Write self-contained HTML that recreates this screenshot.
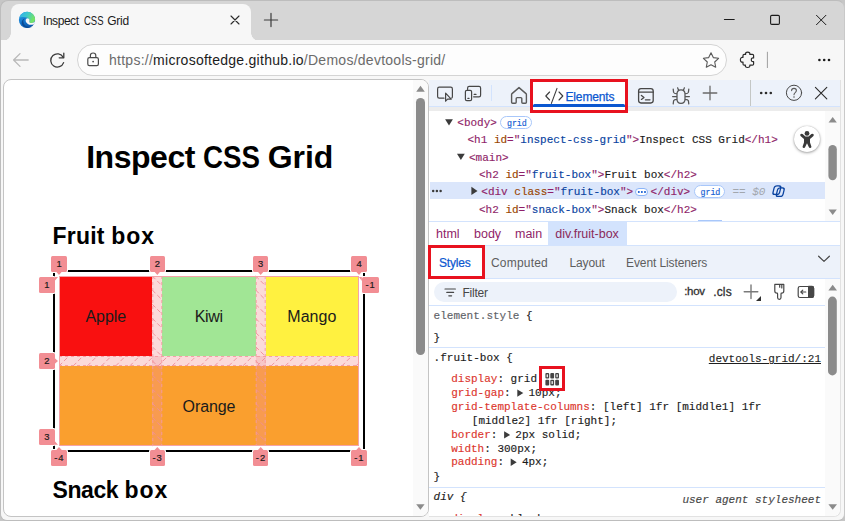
<!DOCTYPE html>
<html lang="en">
<head>
<meta charset="utf-8">
<title>Inspect CSS Grid</title>
<style>
*{box-sizing:border-box;margin:0;padding:0}
html,body{width:845px;height:521px;overflow:hidden;background:#c6c6c6}
body{position:relative;font-family:"Liberation Sans",sans-serif;color:#1b1b1b}
.abs{position:absolute}
.t{position:absolute;white-space:nowrap;line-height:1}
.mono{font-family:"Liberation Mono",monospace;font-size:11px;-webkit-text-stroke:0.15px currentColor}
#win{position:absolute;left:0;top:0;width:844.5px;height:521px;background:#d6d6d6;border-radius:8px 8px 7px 7px;overflow:hidden;border:1px solid #bdbdbd;border-right-color:#c9c9c9;border-bottom-color:#bdbdbd}
#tab{position:absolute;left:11px;top:4px;width:240px;height:37px;background:#f7f7f7;border-radius:8px 8px 0 0}
#tab:before,#tab:after{content:"";position:absolute;bottom:0;width:8px;height:8px}
#tab:before{left:-8px;background:radial-gradient(circle at 0 0,transparent 7.5px,#f7f7f7 8px)}
#tab:after{right:-8px;background:radial-gradient(circle at 100% 0,transparent 7.5px,#f7f7f7 8px)}
#toolbar{position:absolute;left:-1px;top:39px;width:845px;height:481px;background:#f7f7f7}
#addr{position:absolute;left:77px;top:44px;width:650px;height:32px;border:1px solid #d4d4d4;border-radius:16px;background:#fdfdfd}
#page{position:absolute;left:3px;top:79px;width:426px;height:438px;background:#fff;border:1px solid #c4c4c4;border-radius:8px;overflow:hidden}
#dt{position:absolute;left:429px;top:80px;width:411.5px;height:436.5px;background:#fff;border-right:1px solid #e2e2e2;border-bottom:1px solid #e2e2e2;border-radius:0 0 7px 0;overflow:hidden}
.red{position:absolute;border:3px solid #e8121f}
.lbl{position:absolute;background:#f28e94;color:#1b1b1b;font-size:9.4px;-webkit-text-stroke:0.2px #1b1b1b;text-align:center;border-radius:1.5px;line-height:16px;height:15.6px;width:15.6px;box-shadow:0 0 0 1px #fff}
.sep{position:absolute;height:1px;background:#d3e3fd}
.p{color:#dc362e}
.tag{color:#8f1f69}
.an{color:#994500}
.av{color:#0842a0}
</style>
</head>
<body>
<div id="win"><div id="toolbar"></div></div>
<div id="tab"></div>
<div id="addr"></div>

<!--CH-->
<svg class="abs" style="left:0;top:0" width="845" height="80" viewBox="0 0 845 80" fill="none" stroke-linecap="round" stroke-linejoin="round">
<defs>
<linearGradient id="eg1" x1="0" y1="0" x2="1" y2="1"><stop offset="0" stop-color="#35c1f1"/><stop offset=".5" stop-color="#1b9de2"/><stop offset="1" stop-color="#0c59a4"/></linearGradient>
<linearGradient id="eg2" x1="0" y1="0" x2="1" y2="0.35"><stop offset="0" stop-color="#31aef0"/><stop offset=".5" stop-color="#3cc6cf"/><stop offset="1" stop-color="#74e465"/></linearGradient>
<linearGradient id="eg3" x1="0" y1="0" x2=".6" y2="1"><stop offset="0" stop-color="#2a9fe3"/><stop offset=".6" stop-color="#1374cc"/><stop offset="1" stop-color="#0b55a8"/></linearGradient>
</defs>
<!-- edge logo -->
<g>
<circle cx="27" cy="19.9" r="8.1" fill="url(#eg3)"/>
<path d="M19.3 17.4Q21.6 11.9 27.2 11.8Q33.6 12 35 18.4Q35.5 22.4 31.8 22.9Q28.8 23 29.4 20.9Q29.8 18.6 27.4 17.8Q23.6 16.6 19.3 17.4Z" fill="url(#eg2)"/>
<path d="M24.6 18.2Q22.6 20.4 23.8 23.4Q25.6 27.2 30.6 27.2Q32.6 26.8 33.8 25.6Q31.6 28 27.6 28Q23.4 27.6 21.8 24Q21 20.4 24.6 18.2Z" fill="#0b4a94"/>
<path d="M27.4 18.2Q29.8 18.6 29.4 20.9Q28.8 23 31.8 22.9Q33.8 22.8 35 21.4Q35 23.2 33.8 24.2Q30.6 25.6 27.8 24Q25.2 22.4 25.6 20Q26 18.2 27.4 18.2Z" fill="#f7f7f7"/>
</g>
<!-- tab close -->
<path d="M231 16L239 24M239 16L231 24" stroke="#2b2b2b" stroke-width="1.1"/>
<!-- new tab plus -->
<path d="M264.4 20H277.6M271 13.4V26.6" stroke="#3b3b3b" stroke-width="1.2"/>
<!-- window controls -->
<path d="M724.4 19.5H734.2" stroke="#1b1b1b" stroke-width="1.1"/>
<rect x="770.6" y="15.4" width="8.8" height="9" rx="1.2" stroke="#1b1b1b" stroke-width="1.1"/>
<path d="M816.2 15L826.2 25M826.2 15L816.2 25" stroke="#1b1b1b" stroke-width="1" stroke-linecap="butt"/>
<!-- back -->
<path d="M13.6 60H28.2M20 53.6L13.6 60L20 66.4" stroke="#b9b9b9" stroke-width="1.3"/>
<!-- reload -->
<path d="M63.2 57.4A6.6 6.6 0 1 0 63.6 62.6" stroke="#3b3b3b" stroke-width="1.3"/>
<path d="M63.8 53.2V57.8H59.2" stroke="#3b3b3b" stroke-width="1.3"/>
<!-- lock -->
<rect x="87.8" y="57.6" width="10.6" height="8" rx="1.6" stroke="#4a4a4a" stroke-width="1.2"/>
<path d="M90.4 57.4V55.6Q90.4 53 93.1 53Q95.8 53 95.8 55.6V57.4" stroke="#4a4a4a" stroke-width="1.2"/>
<circle cx="93.1" cy="61.6" r=".9" fill="#4a4a4a"/>
<!-- star -->
<path d="M711 52.8L713.3 57.6L718.6 58.3L714.7 62L715.7 67.2L711 64.7L706.3 67.2L707.3 62L703.4 58.3L708.7 57.6Z" stroke="#5a5a5a" stroke-width="1.1"/>
<!-- puzzle -->
<path d="M744.2 54.4H745.6Q745.1 52.2 747.7 52.2Q750.3 52.2 749.8 54.4H752.4Q753.6 54.4 753.6 55.6V58Q751.3 57.5 751.3 59.8Q751.3 62.1 753.6 61.6V64Q753.6 65.2 752.4 65.2H749.8Q750.3 67.5 747.6 67.5Q744.9 67.5 745.4 65.2H744.2Q743 65.2 743 64V62.1Q740.4 62.6 740.4 59.8Q740.4 57 743 57.5V55.6Q743 54.4 744.2 54.4Z" stroke="#2b2b2b" stroke-width="1.2"/>
<path d="M767.4 52.2V67.6" stroke="#9e9e9e" stroke-width="1"/>
<g fill="#1b1b1b"><circle cx="819.4" cy="60" r="1.3"/><circle cx="824.2" cy="60" r="1.3"/><circle cx="829" cy="60" r="1.3"/></g>
</svg>
<!--/CH-->
<!-- tab contents -->
<span class="t" id="tabtitle" style="left:43px;top:14.5px;font-size:12px"><span class="abs" style="left:0;top:0;letter-spacing:-0.45px">Inspect </span><span class="abs" style="left:41.2px;top:0;transform:scaleX(.79);transform-origin:0 0">CSS </span><span class="abs" style="left:64.2px;top:0;letter-spacing:-0.25px">Grid</span></span>

<!-- url -->
<span class="t" id="url" style="left:109px;top:52.6px;font-size:14px;letter-spacing:0.26px;color:#6b6b6b">https://<span style="color:#1b1b1b">microsoftedge.github.io</span>/Demos/devtools-grid/</span>

<div id="page">
</div>

<div id="dt">
</div>


<!-- PAGE CONTENT -->
<span class="t" id="h1" style="left:86.2px;top:140.8px;font-size:32px;font-weight:bold;color:#000"><span class="abs" style="left:0;top:0;letter-spacing:-0.47px">Inspect </span><span class="abs" style="left:116.6px;top:0;transform:scaleX(.865);transform-origin:0 0">CSS </span><span class="abs" style="left:181.6px;top:0;letter-spacing:-0.1px">Grid</span></span>
<span class="t" id="h2a" style="left:52.6px;top:224.7px;font-size:23px;font-weight:bold;color:#000"><span class="abs" style="left:0;top:0;letter-spacing:0.2px">Fruit </span><span class="abs" style="left:58.7px;top:0;letter-spacing:0.95px">box</span></span>
<span class="t" id="h2b" style="left:52.6px;top:478.8px;font-size:23px;font-weight:bold;color:#000"><span class="abs" style="left:0;top:0;letter-spacing:-0.45px">Snack </span><span class="abs" style="left:71.8px;top:0;letter-spacing:0.95px">box</span></span>
<!--GRID-->
<div class="abs" style="left:53px;top:270px;width:312px;height:182px;border:2px solid #000"></div>
<div class="abs" style="left:59px;top:276px;width:300px;height:170px;background:#fbdada"></div>
<div class="abs" style="left:152.33px;top:356px;width:10px;height:10px;background:#f7c6c8"></div>
<div class="abs" style="left:255.67px;top:356px;width:10px;height:10px;background:#f7c6c8"></div>
<div class="abs cell" style="left:59px;top:276px;width:93.33px;height:80px;background:#f91010"></div>
<div class="abs cell" style="left:162.33px;top:276px;width:93.34px;height:80px;background:#a1e695"></div>
<div class="abs cell" style="left:265.67px;top:276px;width:93.33px;height:80px;background:#fff140"></div>
<div class="abs cell" style="left:59px;top:366px;width:300px;height:80px;background:#fa9f2e"></div>
<div class="abs" style="left:152.33px;top:366px;width:10px;height:80px;background:#f89b50"></div>
<div class="abs" style="left:255.67px;top:366px;width:10px;height:80px;background:#f89b50"></div>
<span class="t cl" id="apple" style="left:85.5px;top:308.9px;font-size:16px;letter-spacing:-0.05px">Apple</span>
<span class="t cl" id="kiwi" style="left:194.8px;top:308.9px;font-size:16px;letter-spacing:-0.35px">Kiwi</span>
<span class="t cl" id="mango" style="left:287.3px;top:308.9px;font-size:16px;letter-spacing:0.05px">Mango</span>
<span class="t cl" id="orange" style="left:182.6px;top:399.1px;font-size:16px;letter-spacing:-0.1px">Orange</span>
<svg class="abs" style="left:36px;top:250px" width="360" height="225" viewBox="36 250 360 225">
<path d="M152.3 276.0L162.3 286.0M152.3 290.1L162.3 300.1M152.3 304.3L162.3 314.3M152.3 318.4L162.3 328.4M152.3 332.6L162.3 342.6M152.3 346.7L162.3 356.7M152.3 360.8L162.3 370.8M152.3 375.0L162.3 385.0M152.3 389.1L162.3 399.1M152.3 403.3L162.3 413.3M152.3 417.4L162.3 427.4M152.3 431.5L162.3 441.5M152.3 445.7L152.7 446.0M255.7 276.0L265.7 286.0M255.7 290.1L265.7 300.1M255.7 304.3L265.7 314.3M255.7 318.4L265.7 328.4M255.7 332.6L265.7 342.6M255.7 346.7L265.7 356.7M255.7 360.8L265.7 370.8M255.7 375.0L265.7 385.0M255.7 389.1L265.7 399.1M255.7 403.3L265.7 413.3M255.7 417.4L265.7 427.4M255.7 431.5L265.7 441.5M255.7 445.7L256.0 446.0M59.0 366L69.0 356.0M73.1 366L83.1 356.0M87.3 366L97.3 356.0M101.4 366L111.4 356.0M115.6 366L125.6 356.0M129.7 366L139.7 356.0M143.8 366L153.8 356.0M158.0 366L168.0 356.0M172.1 366L182.1 356.0M186.3 366L196.3 356.0M200.4 366L210.4 356.0M214.5 366L224.5 356.0M228.7 366L238.7 356.0M242.8 366L252.8 356.0M257.0 366L267.0 356.0M271.1 366L281.1 356.0M285.2 366L295.2 356.0M299.4 366L309.4 356.0M313.5 366L323.5 356.0M327.7 366L337.7 356.0M341.8 366L351.8 356.0M355.9 366L359.0 362.9" stroke="#ef8d97" stroke-opacity=".9" stroke-width="1" stroke-dasharray="4.5 2.5" fill="none"/>
<path d="M152.8 276V446M161.8 276V446M256.2 276V446M265.2 276V446M59 356.5H359M59 365.5H359" stroke="#f49aa2" stroke-opacity=".9" stroke-width="1" stroke-dasharray="3 3" fill="none"/>
<path d="M59.5 276V446M358.5 276V446M59 276.5H359M59 445.5H359" stroke="#f5a3a9" stroke-width="1" fill="none"/>
</svg>
<div class="lbl" style="left:51.2px;top:256.0px;width:15.6px;">1</div>
<div class="lbl" style="left:149.5px;top:256.0px;width:15.6px;">2</div>
<div class="lbl" style="left:252.9px;top:256.0px;width:15.6px;">3</div>
<div class="lbl" style="left:351.2px;top:256.0px;width:15.6px;">4</div>
<div class="lbl" style="left:51.2px;top:450.0px;width:15.6px;letter-spacing:0.9px;text-indent:0.5px;">-4</div>
<div class="lbl" style="left:149.5px;top:450.0px;width:15.6px;letter-spacing:0.9px;text-indent:0.5px;">-3</div>
<div class="lbl" style="left:252.9px;top:450.0px;width:15.6px;letter-spacing:0.9px;text-indent:0.5px;">-2</div>
<div class="lbl" style="left:351.2px;top:450.0px;width:15.6px;letter-spacing:0.9px;text-indent:0.5px;">-1</div>
<div class="lbl" style="left:39.1px;top:277.1px;width:15.6px;">1</div>
<div class="lbl" style="left:39.1px;top:353.2px;width:15.6px;">2</div>
<div class="lbl" style="left:39.1px;top:429.1px;width:15.6px;">3</div>
<div class="lbl" style="left:361.7px;top:277.1px;width:17.2px;letter-spacing:0.9px;text-indent:0.5px;">-1</div>
<svg class="abs" style="left:36px;top:250px" width="360" height="225" viewBox="36 250 360 225"><path d="M56.0 271.5L62.0 271.5L59.0 275.0ZM154.3 271.5L160.3 271.5L157.3 275.0ZM257.7 271.5L263.7 271.5L260.7 275.0ZM356.0 271.5L362.0 271.5L359.0 275.0ZM56.0 450.2L62.0 450.2L59.0 447.0ZM154.3 450.2L160.3 450.2L157.3 447.0ZM257.7 450.2L263.7 450.2L260.7 447.0ZM356.0 450.2L362.0 450.2L359.0 447.0ZM54.6 277.1L58.0 277.1L54.6 281.0ZM54.6 358.0L54.6 364.0L58.0 361.0ZM54.6 444.7L58.0 444.7L54.6 441.0ZM361.8 277.1L359.0 277.1L361.8 281.0Z" fill="#f28e94"/></svg>
<!--/GRID-->
<!-- page scrollbar -->
<div class="abs" style="left:413px;top:80px;width:15px;height:436px;background:#fafafa;border-radius:0 7px 7px 0"></div>
<svg class="abs" style="left:413px;top:80px" width="15" height="436" viewBox="413 80 15 436"><g fill="#8b8b8b"><path d="M416.2 91.8H424.8L420.5 85.8Z"/><path d="M416.2 504.2H424.6L420.4 509.8Z"/></g></svg>
<div class="abs" style="left:416px;top:97.8px;width:9px;height:257.2px;background:#8b8b8b;border-radius:4.5px"></div>

<div id="dtclip" style="position:absolute;left:0;top:0;width:840.4px;height:516.4px;overflow:hidden;border-radius:0 0 7px 0">
<!--DT-->
<div class="abs" style="left:429px;top:80px;width:411px;height:26px;background:#edf2fa"></div>
<div class="abs" style="left:429px;top:106px;width:411px;height:1px;background:#d3e3fd"></div>
<div class="abs" style="left:429px;top:107px;width:411px;height:3.6px;background:#ececec"></div>
<div class="abs" style="left:491px;top:85px;width:1px;height:16px;background:#d3e3fd"></div>
<div class="abs" style="left:750px;top:80px;width:1px;height:26px;background:#c4c7c5"></div>
<div class="abs" style="left:533px;top:82px;width:92px;height:28px;background:#fff"></div>
<div class="abs" style="left:533px;top:104.3px;width:92px;height:2.6px;background:#0b57d0;border-radius:1.5px 1.5px 0 0"></div>
<span class="t" id="eltab" style="left:565.5px;top:90.5px;font-size:12px;letter-spacing:-0.15px;color:#0b57d0;-webkit-text-stroke:0.25px #0b57d0">Elements</span>
<div class="red" style="left:530px;top:79px;width:98px;height:34px"></div>
<svg class="abs" style="left:429px;top:80px" width="411" height="30" viewBox="429 80 411 30" fill="none" stroke="#474747" stroke-width="1.2" stroke-linecap="round" stroke-linejoin="round">
<!-- inspect -->
<path d="M444 98.2H439.3Q437.6 98.2 437.6 96.5V88.9Q437.6 87.2 439.3 87.2H450.7Q452.4 87.2 452.4 88.9V96.5Q452.4 97.6 451.8 98"/>
<path d="M445.6 93.2V101.2L447.6 99.2H451.2Z"/>
<!-- device -->
<path d="M467.6 89.5V88Q467.6 86.4 469.2 86.4H479Q480.6 86.4 480.6 88V95.2Q480.6 96.8 479 96.8H473.6"/>
<rect x="465.4" y="90.4" width="6.2" height="10.2" rx="1.4"/>
<path d="M467.9 98.4H469M474.2 94.4H476"/>
<!-- home -->
<path stroke="#5a5a5a" stroke-width="1.4" d="M519 87.6L512 93.6Q511.6 94 511.6 94.6V102.2Q511.6 103.2 512.6 103.2H515.2Q516.2 103.2 516.2 102.2V98.6Q516.2 97.6 517.2 97.6H520.8Q521.8 97.6 521.8 98.6V102.2Q521.8 103.2 522.8 103.2H525.4Q526.4 103.2 526.4 102.2V94.6Q526.4 94 526 93.6Z"/>
<!-- code </> -->
<path stroke="#3c3c3c" stroke-width="1.1" d="M549.6 92L545.8 96L549.6 100M559 92L562.8 96L559 100M557 88.4L551.4 103.4"/>
<!-- console -->
<rect x="638.6" y="88.6" width="14.6" height="14.4" rx="2.4" stroke-width="1.3"/>
<path stroke-width="1.3" d="M638.6 92.2H653.2M641.4 95.4L644 97.4L641.4 99.4M645.4 99.8H650"/>
<!-- bug -->
<path stroke="#555" stroke-width="1.25" d="M677 94Q677 89.8 681 89.8Q685 89.8 685 94V99Q685 103.4 681 103.4Q677 103.4 677 99ZM678.6 90.4L677.6 87.8M683.4 90.4L684.4 87.8M672.6 96.6H677M685 96.6H689.4M677 93.8Q674 93.6 673.6 92.4L673.2 89.2M685 93.8Q688 93.6 688.4 92.4L688.8 89.2M677 99.4Q674 99.6 673.6 100.8L673.2 103.8M685 99.4Q688 99.6 688.4 100.8L688.8 103.8"/>
<!-- plus -->
<path stroke="#6a6a6a" stroke-width="1.3" d="M703.2 93H716.8M710 86.2V99.8"/>
<!-- dots -->
<g fill="#2b2b2b" stroke="none"><circle cx="761.2" cy="93" r="1.3"/><circle cx="766" cy="93" r="1.3"/><circle cx="770.8" cy="93" r="1.3"/></g>
<!-- help -->
<circle cx="794" cy="92.8" r="7.6" stroke="#474747" stroke-width="1"/>
<path stroke="#5a5a5a" stroke-width="1.1" d="M791.6 90.6Q791.6 88.4 794 88.4Q796.4 88.4 796.4 90.6Q796.4 91.8 795.2 92.6Q794 93.4 794 94.8"/>
<circle cx="794" cy="97" r=".8" fill="#5a5a5a" stroke="none"/>
<!-- close -->
<path stroke="#2b2b2b" stroke-width="1.1" d="M815.4 87.4L826.8 98.8M826.8 87.4L815.4 98.8"/>
</svg>
<div class="abs" style="left:825px;top:110.6px;width:15.4px;height:110.4px;background:#fafafa"></div>
<div class="abs" style="left:825px;top:279px;width:15.4px;height:238px;background:#fafafa"></div>
<div class="abs" style="left:430px;top:182.2px;width:395px;height:17.2px;background:#dbe6fb"></div>
<span class="t mono" id=r0 style="left:457.3px;top:118.2px"><span class="tag">&lt;body&gt;</span></span>
<span class="t mono" id=r1 style="left:467.5px;top:134.8px"><span class="tag">&lt;h1 </span><span class="an">id</span><span class="tag">="</span><span class="av">inspect-css-grid</span><span class="tag">"&gt;</span>Inspect CSS Grid<span class="tag">&lt;/h1&gt;</span></span>
<span class="t mono" id=r2 style="left:469px;top:152.5px"><span class="tag">&lt;main&gt;</span></span>
<span class="t mono" id=r3 style="left:479px;top:169.5px"><span class="tag">&lt;h2 </span><span class="an">id</span><span class="tag">="</span><span class="av">fruit-box</span><span class="tag">"&gt;</span>Fruit box<span class="tag">&lt;/h2&gt;</span></span>
<span class="t mono" id=r4 style="left:481.3px;top:187.1px"><span class="tag">&lt;div </span><span class="an">class</span><span class="tag">="</span><span class="av">fruit-box</span><span class="tag">"&gt;</span></span>
<span class="t mono" id=r4b style="left:650.6px;top:187.1px"><span class="tag">&lt;/div&gt;</span></span>
<span class="t mono" id=r4c style="left:732.4px;top:187.1px"><span style="color:#a2a7ae;font-style:italic;-webkit-text-stroke:0">== $0</span></span>
<span class="t mono" id=r5 style="left:479px;top:204.6px"><span class="tag">&lt;h2 </span><span class="an">id</span><span class="tag">="</span><span class="av">snack-box</span><span class="tag">"&gt;</span>Snack box<span class="tag">&lt;/h2&gt;</span></span>
<div class="abs" style="left:500.2px;top:116.2px;width:31.8px;height:13.3px;border:1px solid #a8c7fa;border-radius:6.65px;background:#fff"></div>
<span class="t mono" style="left:507px;top:119.7px;font-size:8.4px;letter-spacing:-0.1px;color:#1660d4;-webkit-text-stroke:0.15px #1660d4">grid</span>
<div class="abs" style="left:693.8px;top:185.2px;width:31.4px;height:13px;border:1px solid #a8c7fa;border-radius:6.5px;background:#fff"></div>
<span class="t mono" style="left:700.6px;top:188.7px;font-size:8.4px;letter-spacing:-0.1px;color:#1660d4;-webkit-text-stroke:0.15px #1660d4">grid</span>
<div class="abs" style="left:635.4px;top:187.6px;width:13px;height:8.6px;border:1px solid #8ab4f8;border-radius:4.3px;background:#fff"></div>
<svg class="abs" style="left:429px;top:110px" width="411" height="112" viewBox="429 110 411 112"><g fill="#3b3b3b"><path d="M445.1 119.3H452.9L449 125.4Z"/><path d="M457 153.8H464.8L460.9 159.9Z"/><path d="M471.4 186.7V195.1L477.5 190.9Z"/><circle cx="433.2" cy="191" r="1.25"/><circle cx="436.9" cy="191" r="1.25"/><circle cx="440.6" cy="191" r="1.25"/></g><g fill="#0b57d0"><circle cx="638.8" cy="191.9" r="1"/><circle cx="641.9" cy="191.9" r="1"/><circle cx="645" cy="191.9" r="1"/></g><g fill="none" stroke="#0842a0" stroke-width="1.3" stroke-linejoin="round"><rect x="773.6" y="185.8" width="6.6" height="8.6" rx="2.2" transform="skewX(-14)" style="transform-origin:777px 190px"/><rect x="777" y="187.8" width="6.6" height="8.6" rx="2.2" transform="skewX(-14)" style="transform-origin:780px 192px"/></g><g fill="#8b8b8b"><path d="M828.6 122.6H836.8L832.7 117Z"/><path d="M828.6 209.4H836.8L832.7 215Z"/><rect x="828.4" y="145" width="8.4" height="35.2" rx="4.2"/></g></svg>
<div class="abs" style="left:794.2px;top:126.4px;width:26px;height:26px;border-radius:13px;background:#fff;box-shadow:0 1px 3px rgba(0,0,0,.35),0 0 1px rgba(0,0,0,.3)"></div>
<svg class="abs" style="left:794.2px;top:126.4px" width="26" height="26" viewBox="0 0 26 26"><g fill="#3a3a3a"><circle cx="13" cy="7.4" r="2.4"/><path d="M6.4 8.2Q7.4 7.2 8.6 8L11.4 10.4H14.6L17.4 8Q18.6 7.2 19.6 8.2Q20.2 9.4 19.2 10.2L16 13V16.4L17.4 20.4Q17.6 21.8 16.4 22Q15.2 22.2 14.8 21L13 17.2L11.2 21Q10.8 22.2 9.6 22Q8.4 21.8 8.6 20.4L10 16.4V13L6.8 10.2Q5.8 9.4 6.4 8.2Z"/></g></svg>
<div class="abs" style="left:698px;top:220.2px;width:24px;height:1px;background:#a8c7fa"></div>
<div class="abs" style="left:429px;top:221px;width:411px;height:1px;background:#d3e3fd"></div>
<div class="abs" style="left:548px;top:222px;width:78.5px;height:23.4px;background:#d3e3fd"></div>
<span class="t" id="bc0" style="left:436px;top:227.6px;font-size:12.5px;color:#8f1f69">html</span>
<span class="t" id="bc1" style="left:474px;top:227.6px;font-size:12.5px;color:#8f1f69">body</span>
<span class="t" id="bc2" style="left:515px;top:227.6px;font-size:12.5px;color:#8f1f69">main</span>
<span class="t" id="bc3" style="left:555.2px;top:227.6px;font-size:12.5px;color:#8a2a5a">div.fruit-box</span>
<div class="abs" style="left:429px;top:245.4px;width:411px;height:32.6px;background:#edf2fa"></div>
<div class="abs" style="left:429px;top:245.4px;width:411px;height:1px;background:#d3e3fd"></div>
<div class="abs" style="left:429px;top:277.8px;width:411px;height:1px;background:#d3e3fd"></div>
<div class="abs" style="left:431px;top:247.6px;width:52px;height:29px;background:#fff"></div>
<span class="t" id="st0" style="left:439px;top:256.9px;font-size:12px;letter-spacing:-0.2px;color:#0b57d0;-webkit-text-stroke:0.2px #0b57d0">Styles</span>
<span class="t" id="st1" style="left:491px;top:256.9px;font-size:12px;letter-spacing:0.2px;color:#5e5e5e">Computed</span>
<span class="t" id="st2" style="left:569.4px;top:256.9px;font-size:12px;letter-spacing:-0.1px;color:#5e5e5e">Layout</span>
<span class="t" id="st3" style="left:626px;top:256.9px;font-size:12px;letter-spacing:-0.1px;color:#5e5e5e">Event Listeners</span>
<div class="red" style="left:428px;top:245px;width:57.4px;height:34.4px"></div>
<div class="abs" style="left:434px;top:282px;width:243.4px;height:19.8px;border-radius:9.9px;background:#edf2fa"></div>
<span class="t" id="flt" style="left:462.4px;top:286.8px;font-size:12px;letter-spacing:-0.2px;color:#474747">Filter</span>
<span class="t" id="hov" style="left:684.2px;top:286.4px;font-size:11.5px;letter-spacing:-0.3px;color:#303030;-webkit-text-stroke:0.3px #303030">:hov</span>
<span class="t" id="cls" style="left:713.2px;top:286.4px;font-size:12px;letter-spacing:0.15px;color:#303030;-webkit-text-stroke:0.3px #303030">.cls</span>
<div class="sep" style="left:429px;top:304.6px;width:396px"></div>
<div class="sep" style="left:429px;top:346.8px;width:396px"></div>
<div class="sep" style="left:429px;top:487px;width:396px"></div>
<svg class="abs" style="left:429px;top:245px" width="411" height="272" viewBox="429 245 411 272" fill="none" stroke="#474747" stroke-width="1.2" stroke-linecap="round" stroke-linejoin="round">
<path d="M818.6 256.2L824 261.4L829.4 256.2" stroke="#474747" stroke-width="1.2"/>
<path d="M445 289H455.4M446.8 292.4H453.6M448.8 295.8H451.6" stroke-width="1.2"/>
<path d="M744.2 291.8H757.8M751 285V298.6" stroke="#7a7a7a" stroke-width="1.4"/>
<path d="M761 296V301H756Z" fill="#303030" stroke="none"/>
<path d="M774.8 284.4H783.8V291Q783.8 293.2 781.6 293.2Q781 293.2 781 294V297.6Q781 299.4 779.3 299.4Q777.6 299.4 777.6 297.6V294Q777.6 293.2 777 293.2Q774.8 293.2 774.8 291ZM779.7 284.6V287.2M781.8 284.6V288"/>
<rect x="798.2" y="286.5" width="15.4" height="11" rx="1.8" stroke="#474747"/>
<path d="M808.6 286.4H812Q813.6 286.4 813.6 288.2V295.6Q813.6 297.4 812 297.4H808.6Z" fill="#474747" stroke="#474747"/>
<path d="M805.8 292H801M802.8 290.1L800.8 292L802.8 293.9" stroke="#474747" stroke-width="1.1"/>
<g fill="#8b8b8b" stroke="none"><path d="M828.4 290.6H837L832.7 284.8Z"/><path d="M828.4 504.2H837L832.7 509.8Z"/><rect x="828" y="296.6" width="8.8" height="78.8" rx="4.4"/></g>
</svg>
<span class="t mono" id=s0 style="left:433.6px;top:311.3px;"><span style="color:#5f6368">element.style</span> {</span>
<span class="t mono"  style="left:433.6px;top:332.5px;">}</span>
<span class="t mono" id=s1 style="left:433.6px;top:352.7px;">.fruit-box {</span>
<span class="t mono" id=s2 style="left:451.2px;top:373.6px;"><span class="p">display</span>: grid</span>
<span class="t mono" id=s3 style="left:451.2px;top:388.0px;"><span class="p">grid-gap</span>:&nbsp;<span style="display:inline-block;width:11.3px"></span>10px;</span>
<span class="t mono" id=s4 style="left:451.2px;top:401.6px;"><span class="p">grid-template-columns</span>: [left] 1fr [middle1] 1fr</span>
<span class="t mono" id=s5 style="left:471.8px;top:415.7px;">[middle2] 1fr [right];</span>
<span class="t mono" id=s6 style="left:451.2px;top:429.7px;"><span class="p">border</span>:&nbsp;<span style="display:inline-block;width:11.3px"></span>2px solid;</span>
<span class="t mono" id=s7 style="left:451.2px;top:443.5px;"><span class="p">width</span>: 300px;</span>
<span class="t mono" id=s8 style="left:451.2px;top:457.1px;"><span class="p">padding</span>:&nbsp;<span style="display:inline-block;width:11.3px"></span>4px;</span>
<span class="t mono"  style="left:433.6px;top:471.5px;">}</span>
<span class="t mono" id=s9 style="left:433.6px;top:492.3px;font-style:italic">div {</span>
<span class="t mono" id="lnk" style="right:19.4px;top:354.4px;text-decoration:underline;color:#1f1f1f">devtools-grid/:21</span>
<span class="t mono" id="uas" style="right:19.4px;top:494.9px;font-style:italic;color:#474747">user agent stylesheet</span>
<span class="t mono" id=s10 style="left:451.2px;top:513.9px;"><span class="p">display</span>: block;</span>
<svg class="abs" style="left:429px;top:360px" width="411" height="120" viewBox="429 360 411 120">
<g fill="#3b3b3b"><path d="M517.3 389.4V396.8L523.3 393.1Z"/><path d="M504.1 431.2V438.6L510.1 434.9Z"/><path d="M510.7 458.5V465.9L516.7 462.2Z"/></g>
<g fill="#444"><rect x="545.4" y="373" width="3.8" height="5.6" rx="1"/><rect x="550.3" y="373" width="3.8" height="5.6" rx="1"/><rect x="555.2" y="373" width="3.8" height="5.6" rx="1"/><rect x="545.4" y="379.8" width="3.8" height="5.6" rx="1"/><rect x="550.3" y="379.8" width="3.8" height="5.6" rx="1"/><rect x="555.2" y="379.8" width="3.8" height="5.6" rx="1"/></g>
<g fill="#e8e8e8"><rect x="546.6" y="374.3" width="1.4" height="3" rx=".5"/><rect x="556.4" y="374.3" width="1.4" height="3" rx=".5"/><rect x="551.5" y="381.1" width="1.4" height="3" rx=".5"/></g>
</svg>
<div class="red" style="left:539.4px;top:366px;width:25.2px;height:25.2px"></div>
<!--/DT-->
</div>
</body>
</html>
